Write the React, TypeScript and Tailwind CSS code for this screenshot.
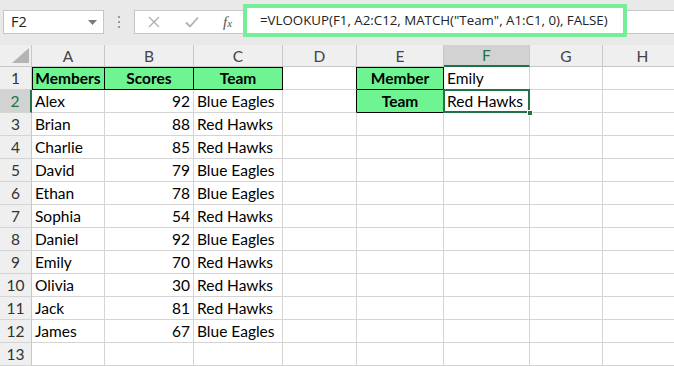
import React from 'react';

const COLS = [
  { key: 'A', w: 73 },
  { key: 'B', w: 89 },
  { key: 'C', w: 89 },
  { key: 'D', w: 74 },
  { key: 'E', w: 87 },
  { key: 'F', w: 86 },
  { key: 'G', w: 73 },
  { key: 'H', w: 80 },
];

const data: [string, number, string][] = [
  ['Alex', 92, 'Blue Eagles'],
  ['Brian', 88, 'Red Hawks'],
  ['Charlie', 85, 'Red Hawks'],
  ['David', 79, 'Blue Eagles'],
  ['Ethan', 78, 'Blue Eagles'],
  ['Sophia', 54, 'Red Hawks'],
  ['Daniel', 92, 'Blue Eagles'],
  ['Emily', 70, 'Red Hawks'],
  ['Olivia', 30, 'Red Hawks'],
  ['Jack', 81, 'Red Hawks'],
  ['James', 67, 'Blue Eagles'],
];

type CellProps = {
  w: number;
  children?: React.ReactNode;
  className?: string;
};

const Cell: React.FC<CellProps> = ({ w, children, className = '' }) => (
  <div
    style={{ width: w }}
    className={`h-full shrink-0 border-r border-b border-[#d4d4d4] flex items-center pt-[2px] px-[3px] whitespace-nowrap overflow-visible ${className}`}
  >
    {children}
  </div>
);

const RowHeader: React.FC<{ n: number; active?: boolean }> = ({ n, active }) => (
  <div
    className={`w-[32px] h-full shrink-0 flex items-center justify-center pt-[2px] border-b border-[#d4d4d4] ${
      active
        ? 'bg-[#d2d2d2] text-[#217346] border-r-2 border-r-[#217346]'
        : 'bg-[#efefef] text-[#333] border-r border-r-[#c8c8c8]'
    }`}
  >
    {n}
  </div>
);

const green = 'bg-[#6ef592] font-bold justify-center';

export default function App() {
  const rows: React.ReactNode[] = [];

  // row 1: headers + lookup label
  rows.push(
    <div key={1} className="flex h-[23px]">
      <RowHeader n={1} />
      <Cell w={73} className={`${green} border-r-black border-b-black shadow-[inset_1px_1px_0_#000]`}>Members</Cell>
      <Cell w={89} className={`${green} border-r-black border-b-black shadow-[inset_0_1px_0_#000]`}>Scores</Cell>
      <Cell w={89} className={`${green} border-r-black border-b-black shadow-[inset_0_1px_0_#000]`}>Team</Cell>
      <Cell w={74} className="border-r-black" />
      <Cell w={87} className={`${green} border-r-black border-b-black shadow-[inset_0_1px_0_#000]`}>Member</Cell>
      <Cell w={86}>Emily</Cell>
      <Cell w={73} />
      <Cell w={80} />
    </div>
  );

  data.forEach(([name, score, team], i) => {
    const n = i + 2;
    rows.push(
      <div key={n} className="flex h-[23px]">
        <RowHeader n={n} active={n === 2} />
        <Cell w={73}>{name}</Cell>
        <Cell w={89} className="justify-end">{score}</Cell>
        <Cell w={89}>{team}</Cell>
        <Cell w={74} className={n === 2 ? 'border-r-black' : ''} />
        {n === 2 ? (
          <Cell w={87} className={`${green} border-r-black border-b-black`}>Team</Cell>
        ) : (
          <Cell w={87} />
        )}
        {n === 2 ? (
          <div style={{ width: 86 }} className="relative h-full shrink-0 border-r border-b border-[#d4d4d4] flex items-center pt-[2px] px-[3px] whitespace-nowrap">
            Red Hawks
            <div className="absolute -left-[1px] -top-[1px] -right-[1px] -bottom-[1px] border-2 border-[#217346]" />
            <div className="absolute -right-[4px] -bottom-[4px] w-[6px] h-[6px] bg-[#217346] border border-white" />
          </div>
        ) : (
          <Cell w={86} />
        )}
        <Cell w={73} />
        <Cell w={80} />
      </div>
    );
  });

  rows.push(
    <div key={13} className="flex h-[23px]">
      <RowHeader n={13} />
      {COLS.map(c => (
        <Cell key={c.key} w={c.w} />
      ))}
    </div>
  );

  return (
    <div className="w-[674px] h-[366px] overflow-hidden bg-white text-[15.5px] text-black font-['Lato','Liberation_Sans',sans-serif]">
      {/* formula bar */}
      <div className="h-[45px] bg-[#e9e9e9] flex items-start">
        <div className="ml-[3px] mt-[10px] w-[101px] h-[24px] bg-white border border-[#c6c6c6] flex items-center justify-between pl-[7px] pr-[6px]">
          <span className="text-[14.5px] text-[#222] font-['Open_Sans',sans-serif]">F2</span>
          <svg width="9" height="5" viewBox="0 0 9 5"><path d="M0 0h9L4.5 5z" fill="#7a7a7a" /></svg>
        </div>
        <div className="w-[30px] h-[45px] flex flex-col items-center justify-center gap-[3px] pb-[2px]">
          <span className="w-[2px] h-[2px] bg-[#9a9a9a]" />
          <span className="w-[2px] h-[2px] bg-[#9a9a9a]" />
          <span className="w-[2px] h-[2px] bg-[#9a9a9a]" />
        </div>
        <div className="mt-[10px] w-[109px] h-[24px] bg-white border border-r-0 border-[#c6c6c6] flex items-center">
          <svg className="ml-[13px]" width="12" height="12" viewBox="0 0 12 12">
            <path d="M1 1l10 10M11 1L1 11" stroke="#b0b0b0" strokeWidth="1.4" />
          </svg>
          <svg className="ml-[25px]" width="14" height="12" viewBox="0 0 14 12">
            <path d="M1 6.5l4 4L13 1.5" stroke="#b0b0b0" strokeWidth="1.8" fill="none" />
          </svg>
          <span className="ml-[24px] text-[15px] italic text-[#555] font-['Liberation_Serif',serif]">
            f<span className="text-[11px]">x</span>
          </span>
        </div>
        <div className="mt-[4px] w-[384px] h-[33px] bg-white border-4 border-[#74ef97] flex items-center pl-[13px]">
          <span className="text-[13.3px] text-[#222] font-['Open_Sans',sans-serif] whitespace-nowrap">
            =VLOOKUP(F1, A2:C12, MATCH("Team", A1:C1, 0), FALSE)
          </span>
        </div>
        <div className="mt-[10px] flex-1 h-[24px] bg-white border-y border-[#c6c6c6]" />
      </div>

      {/* column headers */}
      <div className="flex h-[22px] bg-[#efefef] text-[#444]">
        <div className="w-[32px] h-full shrink-0 border-r border-b border-[#c8c8c8] flex items-end justify-end pr-[2px] pb-[3px]">
          <svg width="17" height="15" viewBox="0 0 17 15"><path d="M17 0v15H0z" fill="#b4b4b4" /></svg>
        </div>
        {COLS.map(c => (
          <div
            key={c.key}
            style={{ width: c.w }}
            className={`h-full shrink-0 flex items-center justify-center pt-[2px] border-r border-[#c8c8c8] ${
              c.key === 'F'
                ? 'bg-[#d2d2d2] text-[#217346] border-b-2 border-b-[#217346]'
                : 'border-b border-b-[#c8c8c8]'
            }`}
          >
            {c.key}
          </div>
        ))}
      </div>

      {rows}
    </div>
  );
}
